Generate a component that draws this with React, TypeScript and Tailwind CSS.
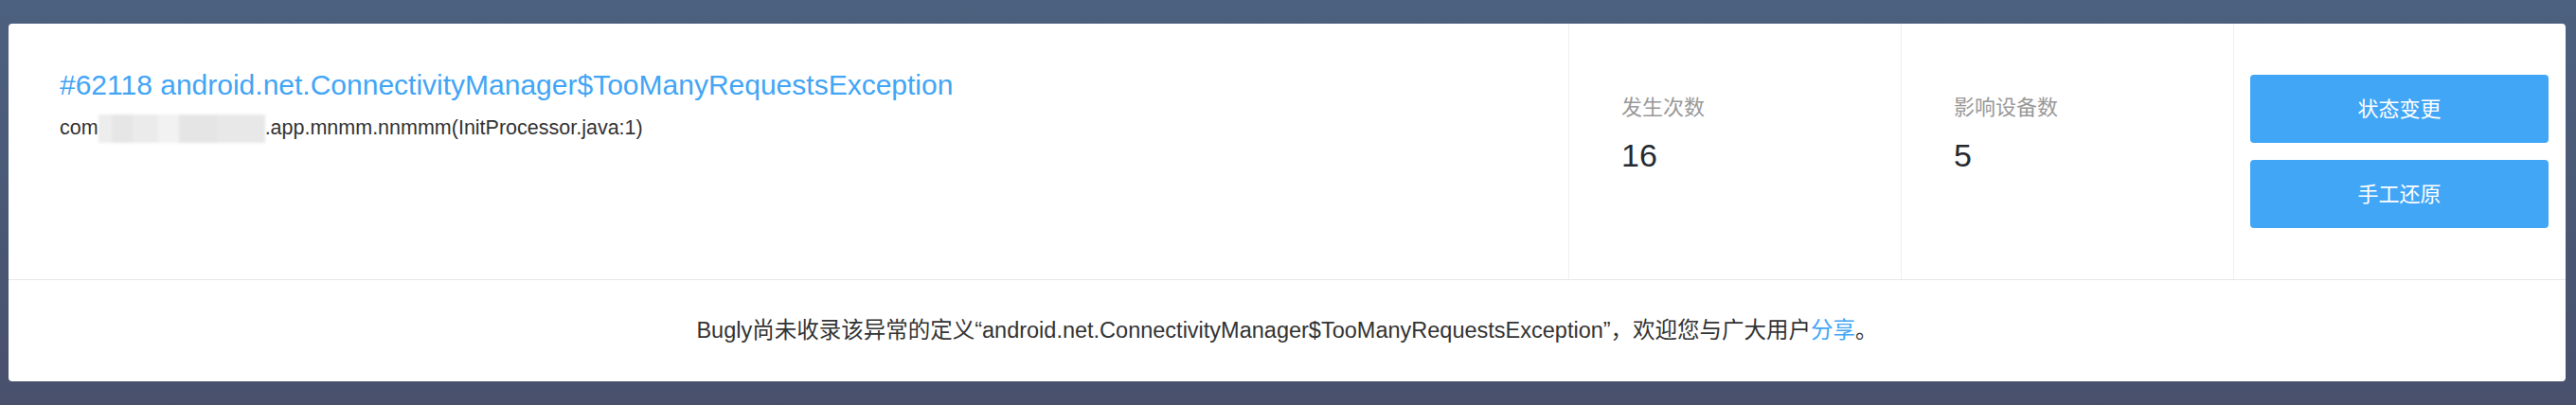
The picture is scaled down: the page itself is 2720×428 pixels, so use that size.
import React from "react";

const latin = "font-['Liberation_Sans','Noto_Sans_CJK_SC',sans-serif]";

function Redacted() {
  // blurred-out package name
  return (
    <span className="inline-flex h-[30px] w-[176px] align-top overflow-hidden blur-[1.5px]">
      <span className="h-full w-[14px] bg-[#ededed]" />
      <span className="h-full w-[22px] bg-[#e6e6e6]" />
      <span className="h-full w-[27px] bg-[#ebebeb]" />
      <span className="h-full w-[22px] bg-[#f2f2f2]" />
      <span className="h-full w-[40px] bg-[#e5e5e5]" />
      <span className="h-full w-[51px] bg-[#e8e8e8]" />
    </span>
  );
}

function Stat({ label, value }: { label: string; value: string }) {
  return (
    <div className="w-[351px] shrink-0 border-l border-[#f0f0f0] pl-[55px] pt-[74px]">
      <div className="text-[22px] leading-[30px] text-[#999999]">{label}</div>
      <div className="mt-[15px] text-[34px] leading-[40px] text-[#262a30]">
        {value}
      </div>
    </div>
  );
}

export default function App() {
  return (
    <div
      className={`h-[428px] w-full bg-linear-to-b from-[#4c617f] to-[#48506c] pl-[9px] pr-[11px] pt-[25px] ${latin}`}
    >
      <div className="flex h-[378px] flex-col rounded-[4px] bg-white">
        <div className="flex h-[271px] border-b border-[#e8e8e8]">
          <div className="flex-1 pl-[54px] pt-[47px]">
            <h1 className="text-[30px] leading-[36px] text-[#42a5f5]">
              #62118 android.net.ConnectivityManager$TooManyRequestsException
            </h1>
            <p className="mt-[13px] text-[21.5px] leading-[28px] text-[#333333]">
              com
              <Redacted />
              .app.mnmm.nnmmm(InitProcessor.java:1)
            </p>
          </div>
          <Stat label="发生次数" value="16" />
          <Stat label="影响设备数" value="5" />
          <div className="flex w-[351px] shrink-0 flex-col justify-center gap-[18px] border-l border-[#f0f0f0] pl-[17px] pr-[18px]">
            <button className="h-[72px] w-full cursor-pointer rounded-[4px] bg-[#42a6f6] text-[22px] text-white">
              状态变更
            </button>
            <button className="h-[72px] w-full cursor-pointer rounded-[4px] bg-[#42a6f6] text-[22px] text-white">
              手工还原
            </button>
          </div>
        </div>
        <div className="flex flex-1 items-center justify-center text-[23.5px] text-[#333333]">
          <p>
            Bugly尚未收录该异常的定义“android.net.ConnectivityManager$TooManyRequestsException”，欢迎您与广大用户
            <a className="cursor-pointer text-[#42a5f5]">分享</a>。
          </p>
        </div>
      </div>
    </div>
  );
}
